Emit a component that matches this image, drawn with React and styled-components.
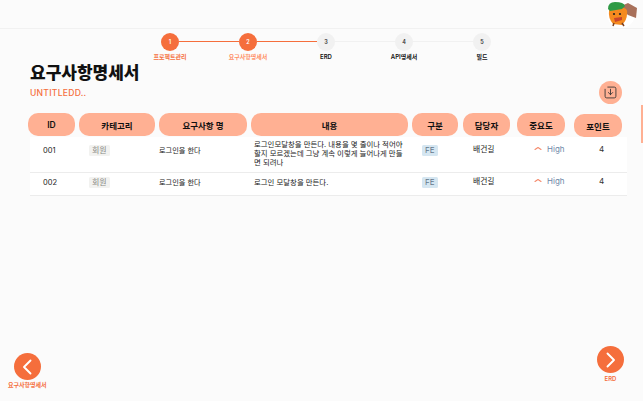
import styled, { createGlobalStyle } from "styled-components";

const GlobalStyle = createGlobalStyle`
  html, body {
    margin: 0;
    padding: 0;
    background: #fbfbfb;
    font-family: Inter, "Noto Sans CJK KR", sans-serif;
    overflow: hidden;
  }
  * { box-sizing: border-box; }
`;

const orange = "#f56e3c";
const salmon = "#ffb093";

const Page = styled.div`
  position: relative;
  width: 643px;
  height: 401px;
  display: flex;
  flex-direction: column;
`;

const Header = styled.header`
  height: 29px;
  flex: none;
  border-bottom: 1px solid #f1f1f1;
  display: flex;
  justify-content: flex-end;
  padding: 0 5px 0 0;
`;

const Stepper = styled.ol`
  list-style: none;
  margin: 0;
  padding: 4px 0 0 131px;
  display: flex;
  height: 32px;
  flex: none;
`;

const Step = styled.li`
  position: relative;
  width: 78px;
  display: flex;
  flex-direction: column;
  align-items: center;
  &:not(:last-child)::after {
    content: "";
    position: absolute;
    left: 48px;
    top: 8px;
    width: 60px;
    height: 1px;
    background: ${(p) => (p.$line ? orange : "#f1f1f1")};
  }
`;

const StepDot = styled.span`
  width: 18px;
  height: 18px;
  border-radius: 50%;
  display: flex;
  align-items: center;
  justify-content: center;
  font-size: 5.5px;
  font-weight: 600;
  background: ${(p) => (p.$active ? orange : "#f1f1f1")};
  color: ${(p) => (p.$active ? "#fff" : "#333")};
`;

const StepLabel = styled.span`
  margin-top: 1px;
  font-size: 6px;
  line-height: 9px;
  font-weight: 600;
  white-space: nowrap;
  color: ${(p) => p.$color};
`;

const TitleBar = styled.div`
  flex: none;
  display: flex;
  justify-content: space-between;
  padding: 1px 21px 0 30px;
  height: 44px;
`;

const Title = styled.h1`
  margin: 0;
  font-size: 17px;
  line-height: 22px;
  font-weight: 800;
  color: #111;
`;

const Subtitle = styled.div`
  margin-top: 4px;
  font-size: 8.6px;
  line-height: 10px;
  font-weight: 500;
  letter-spacing: 0.25px;
  color: ${orange};
`;

const DownloadButton = styled.button`
  width: 23px;
  height: 23px;
  padding: 0;
  border: none;
  border-radius: 50%;
  background: ${salmon};
  display: flex;
  align-items: center;
  justify-content: center;
  align-self: flex-end;
  margin-bottom: 1px;
`;

const HeaderRow = styled.div`
  flex: none;
  margin-top: 8px;
  padding-left: 28px;
  display: flex;
  height: 23px;
`;

const HeadCell = styled.div`
  width: ${(p) => p.$w}px;
  margin-left: ${(p) => p.$gap || 0}px;
  margin-top: ${(p) => p.$drop || 0}px;
  height: 23px;
  border-radius: 10px;
  background: ${salmon};
  display: flex;
  align-items: center;
  justify-content: center;
  font-size: 8.5px;
  font-weight: 600;
  color: #111;
`;

const Rows = styled.div`
  margin: 1px 16px 0 30px;
  background: #fff;
`;

const Row = styled.div`
  display: grid;
  grid-template-columns: 59px 70px 95px 168px 51px 61px 65px 28px;
  height: ${(p) => p.$h}px;
  padding-top: ${(p) => p.$pad}px;
  border-bottom: 1px solid #ececec;
  align-items: start;
  font-size: 7.2px;
  color: #222;
`;

const Id = styled.span`
  padding-left: 13px;
  font-size: 7.5px;
  line-height: 11px;
`;

const Tag = styled.span`
  justify-self: start;
  background: ${(p) => p.$bg};
  color: ${(p) => p.$color};
  border-radius: 1.5px;
  font-size: 8px;
  line-height: 11px;
  padding: 0 3px;
`;

const Name = styled.span`
  line-height: 11px;
`;

const Body = styled.span`
  font-size: 7.4px;
  line-height: ${(p) => (p.$multi ? "8.8px" : "11px")};
  margin-top: ${(p) => (p.$multi ? "-4px" : 0)};
  padding-right: 15px;
`;

const Owner = styled.span`
  margin-top: -1px;
  line-height: 11px;
  font-size: 7.8px;
`;

const Priority = styled.span`
  display: flex;
  align-items: center;
  gap: 5px;
  margin-top: -1px;
  font-size: 8px;
  line-height: 11px;
  color: #6f87a8;

  svg {
    margin-top: -2px;
  }
`;

const Points = styled.span`
  margin-top: -1px;
  font-size: 8px;
  line-height: 11px;
  color: #333;
`;

const NavRow = styled.div`
  margin-top: auto;
  flex: none;
  display: flex;
  justify-content: space-between;
  align-items: flex-end;
  padding: 0 19px 12px 8px;
`;

const NavItem = styled.div`
  display: flex;
  flex-direction: column;
  align-items: center;
  gap: ${(p) => p.$gap}px;
  margin-bottom: ${(p) => p.$lift || 0}px;
  font-size: 6px;
  line-height: 9px;
  font-weight: 600;
  color: ${orange};
`;

const NavCircle = styled.button`
  width: 27px;
  height: 27px;
  padding: 0;
  border: none;
  border-radius: 50%;
  background: ${orange};
  display: flex;
  align-items: center;
  justify-content: center;
`;

const SideTab = styled.div`
  position: absolute;
  right: 0;
  top: 105px;
  width: 2px;
  height: 38px;
  background: ${salmon};
`;

const steps = [
  { n: 1, label: "프로젝트관리", active: true, line: true, color: orange },
  { n: 2, label: "요구사항명세서", active: true, line: true, color: "#ff8f66" },
  { n: 3, label: "ERD", color: "#111" },
  { n: 4, label: "API명세서", color: "#111" },
  { n: 5, label: "빌드", color: "#111" },
];

const columns = [
  { label: "ID", w: 47 },
  { label: "카테고리", w: 76, gap: 4 },
  { label: "요구사항 명", w: 88, gap: 4 },
  { label: "내용", w: 157, gap: 4 },
  { label: "구분", w: 46, gap: 4 },
  { label: "담당자", w: 47, gap: 5 },
  { label: "중요도", w: 48, gap: 7 },
  { label: "포인트", w: 48, gap: 9, drop: 1 },
];

const rows = [
  {
    id: "001",
    name: "로그인을 한다",
    body: "로그인모달창을 만든다. 내용을 몇 줄이나 적어야 할지 모르겠는데 그냥 계속 이렇게 늘어나게 만들면 되려나",
    h: 36,
    pad: 8,
    multi: true,
  },
  { id: "002", name: "로그인을 한다", body: "로그인 모달창을 만든다.", h: 23, pad: 4 },
];

const Mascot = () => (
  <svg width="34" height="28" viewBox="0 0 34 28">
    <circle cx="17" cy="14" r="14" fill="#fff" />
    <path d="M15 7 L24 3 L33 8 L32 18 L24 15 Z" fill="#a8705a" />
    <path d="M5 11 Q5 8 9 8 L20 8 Q24 9 23 14 Q23 20 18 25 L9 24 Q4 18 5 11 Z" fill="#f58a1f" />
    <path d="M4 9 Q4 2 11 2 Q20 2 21 6 L18 9 L6 11 Z" fill="#2f9a45" />
    <circle cx="10" cy="14" r="1.1" fill="#222" />
    <circle cx="16" cy="14" r="1.1" fill="#222" />
    <path d="M10 18 L18 17 L18 20 L11 22 Z" fill="#c9452b" />
    <path d="M10 23 L9 26 M18 23 L20 26" stroke="#7a3f20" strokeWidth="1.5" />
  </svg>
);

const Chevron = ({ left }) => (
  <svg width="14" height="16" viewBox="0 0 14 16" fill="none" stroke="#fff" strokeWidth="1.9" strokeLinecap="round" strokeLinejoin="round">
    <path d={left ? "M10.5 1.5 L4 8 L10.5 14.5" : "M3.5 1.5 L10 8 L3.5 14.5"} />
  </svg>
);

export default function App() {
  return (
    <Page>
      <GlobalStyle />
      <Header>
        <Mascot />
      </Header>
      <Stepper>
        {steps.map((s) => (
          <Step key={s.n} $line={s.line}>
            <StepDot $active={s.active}>{s.n}</StepDot>
            <StepLabel $color={s.color}>{s.label}</StepLabel>
          </Step>
        ))}
      </Stepper>
      <TitleBar>
        <div>
          <Title>요구사항명세서</Title>
          <Subtitle>UNTITLEDD..</Subtitle>
        </div>
        <DownloadButton aria-label="download">
          <svg width="13" height="13" viewBox="0 0 12 12" fill="none" stroke="#333" strokeWidth="0.8" strokeLinecap="round" strokeLinejoin="round">
            <path d="M3.5 1 H9.5 Q11 1 11 2.5 V9.5 Q11 11 9.5 11 H2.5 Q1 11 1 9.5 V3" />
            <path d="M6 3 V8 M4 6 L6 8 L8 6" />
          </svg>
        </DownloadButton>
      </TitleBar>
      <HeaderRow>
        {columns.map((c) => (
          <HeadCell key={c.label} $w={c.w} $gap={c.gap} $drop={c.drop}>
            {c.label}
          </HeadCell>
        ))}
      </HeaderRow>
      <Rows>
        {rows.map((r) => (
          <Row key={r.id} $h={r.h} $pad={r.pad}>
            <Id>{r.id}</Id>
            <Tag $bg="#f2f2f0" $color="#8a8a86">회원</Tag>
            <Name>{r.name}</Name>
            <Body $multi={r.multi}>{r.body}</Body>
            <Tag $bg="#d5e6f1" $color="#64788c">FE</Tag>
            <Owner>배건길</Owner>
            <Priority>
              <svg width="8" height="5" viewBox="0 0 8 5" fill="none" stroke="#f58a6c" strokeWidth="1.1" strokeLinecap="round" strokeLinejoin="round">
                <path d="M1 3.5 L4 1.5 L7 3.5" />
              </svg>
              High
            </Priority>
            <Points>4</Points>
          </Row>
        ))}
      </Rows>
      <NavRow>
        <NavItem $gap={0}>
          <NavCircle aria-label="previous">
            <Chevron left />
          </NavCircle>
          요구사항명세서
        </NavItem>
        <NavItem $gap={1} $lift={6}>
          <NavCircle aria-label="next">
            <Chevron />
          </NavCircle>
          ERD
        </NavItem>
      </NavRow>
      <SideTab />
    </Page>
  );
}
